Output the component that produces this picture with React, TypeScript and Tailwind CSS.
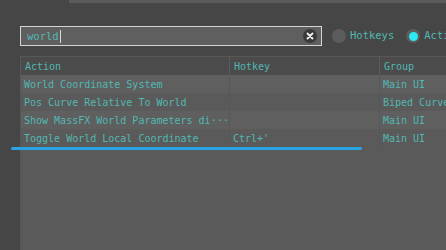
import React from 'react'

const rows = [
  { action: 'World Coordinate System', hotkey: '', group: 'Main UI' },
  { action: 'Pos Curve Relative To World', hotkey: '', group: 'Biped Curve' },
  { action: 'Show MassFX World Parameters di···', hotkey: '', group: 'Main UI' },
  { action: 'Toggle World Local Coordinate', hotkey: "Ctrl+'", group: 'Main UI' },
]

const mono = { fontFamily: '"DejaVu Sans Mono", "Liberation Mono", monospace' }

export default function App() {
  return (
    <div
      className="relative w-[446px] h-[250px] overflow-hidden bg-[#464646] text-[10px] text-[#52b8b2]"
      style={mono}
    >
      {/* top strip */}
      <div className="ml-[69px] h-[3px] bg-[#5a5a5a]" />

      {/* search row */}
      <div className="flex items-center mt-[23px] ml-[20px] h-[20px] whitespace-nowrap">
        <div className="shrink-0 flex items-center w-[302px] h-[20px] border border-[#d4d4d4] bg-[#5f5f5f] pl-[6px] pr-[4px]">
          <span className="text-[10.5px] leading-none">world</span>
          <span className="w-px h-[13px] bg-[#d8d8d8] ml-px" />
          <span className="ml-auto flex items-center justify-center w-[14px] h-[14px] rounded-full bg-[#3a3a3a]">
            <svg width="8" height="8" viewBox="0 0 8 8">
              <path d="M1.5 1.5 L6.5 6.5 M6.5 1.5 L1.5 6.5" stroke="#f2f2f2" strokeWidth="1.8" strokeLinecap="round" />
            </svg>
          </span>
        </div>
        <span className="shrink-0 ml-[10px] w-[14px] h-[14px] rounded-full bg-[#5c5c5c]" />
        <span className="shrink-0 ml-[4px] text-[10.5px]">Hotkeys</span>
        <span className="shrink-0 ml-[12px] flex items-center justify-center w-[14px] h-[14px] rounded-full bg-[#5c5c5c]">
          <span className="w-[9px] h-[9px] rounded-full bg-[#2ee8f2]" />
        </span>
        <span className="shrink-0 ml-[4px] text-[10.5px]">Action</span>
      </div>

      {/* table */}
      <div className="mt-[10px] ml-[20px] h-[200px] border-l border-t border-[#575757] bg-[#5a5a5a]">
        <div className="flex h-[18px] items-center bg-[#4b4b4b]">
          <div className="w-[209px] pl-[4px] border-r border-[#5c5c5c] h-full flex items-center">Action</div>
          <div className="w-[150px] pl-[4px] border-r border-[#5c5c5c] h-full flex items-center">Hotkey</div>
          <div className="flex-1 pl-[4px] h-full flex items-center">Group</div>
        </div>
        {rows.map((r, i) => (
          <div
            key={r.action}
            className={`flex h-[18px] items-center whitespace-nowrap ${i % 2 === 0 ? 'bg-[#5f5f5f]' : 'bg-[#5a5a5a]'}`}
          >
            <div className="w-[209px] pl-[3px] border-r border-[#575757] h-full flex items-center overflow-hidden">{r.action}</div>
            <div className="w-[150px] pl-[3px] border-r border-[#575757] h-full flex items-center">{r.hotkey}</div>
            <div className="flex-1 pl-[3px] h-full flex items-center overflow-hidden">{r.group}</div>
          </div>
        ))}
      </div>

      {/* annotation underline */}
      <div className="absolute left-[11px] top-[147px] w-[351px] h-[3px] rounded-full bg-[#29a4e2]" />
    </div>
  )
}
